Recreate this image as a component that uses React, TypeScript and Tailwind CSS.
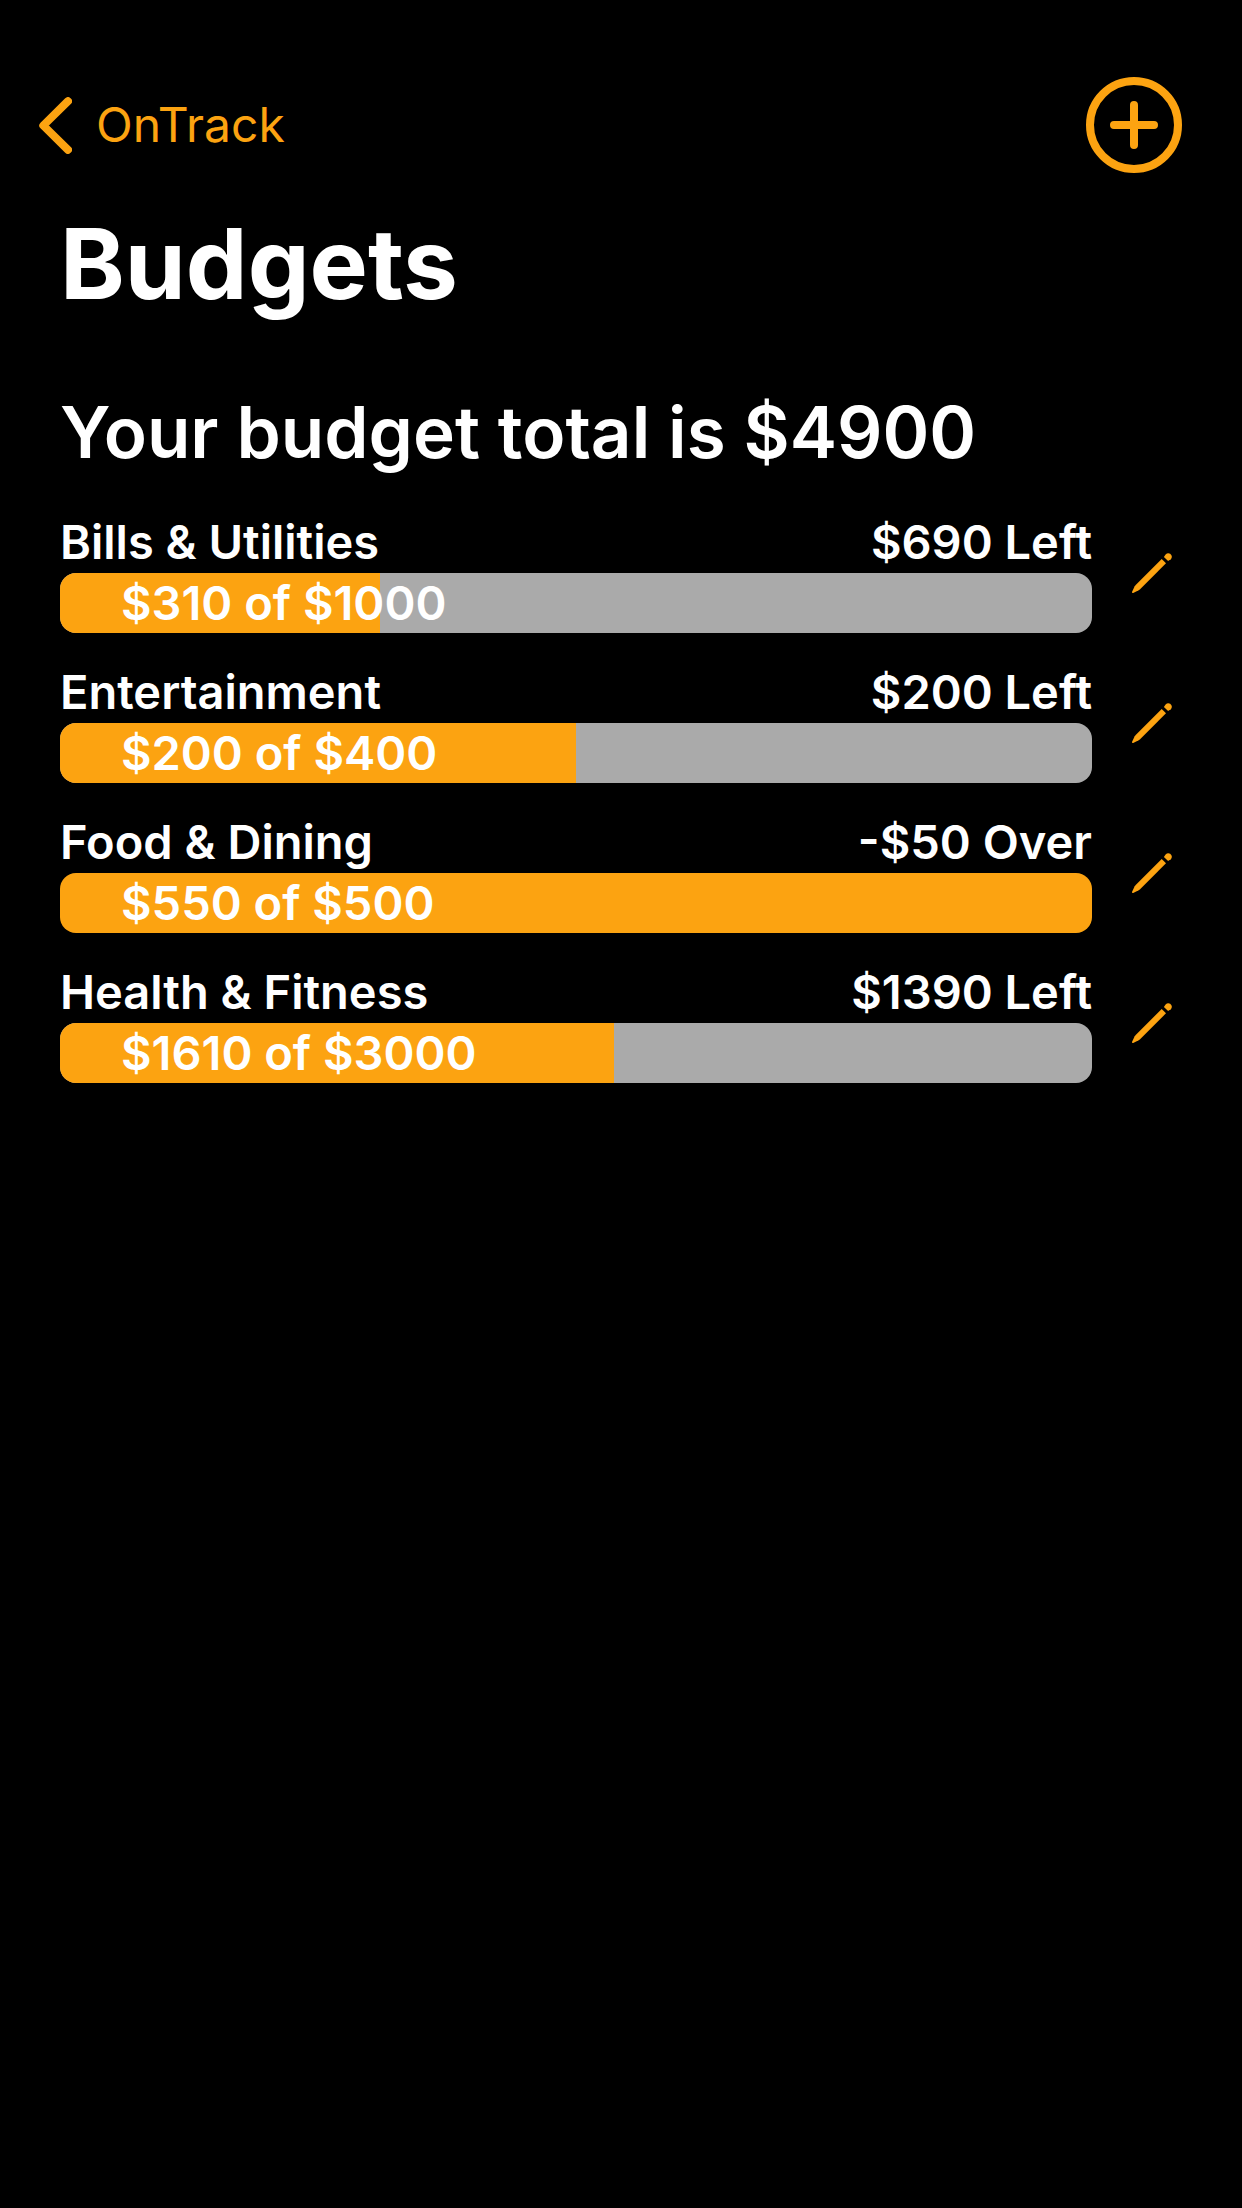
type Budget = { name: string; spent: number; limit: number };

const budgets: Budget[] = [
  { name: "Bills & Utilities", spent: 310, limit: 1000 },
  { name: "Entertainment", spent: 200, limit: 400 },
  { name: "Food & Dining", spent: 550, limit: 500 },
  { name: "Health & Fitness", spent: 1610, limit: 3000 },
];

const total = budgets.reduce((sum, b) => sum + b.limit, 0);

function ChevronIcon() {
  return (
    <svg viewBox="0 0 33 57" className="h-[57px] w-[33px]" fill="none" stroke="currentColor" strokeWidth="8" strokeLinecap="round" strokeLinejoin="round" aria-hidden="true">
      <path d="M29 4.2 4.3 28.5 29 52.8" />
    </svg>
  );
}

function PlusCircleIcon() {
  return (
    <svg viewBox="0 0 96 96" className="size-24" fill="none" stroke="currentColor" strokeWidth="8" strokeLinecap="round" aria-hidden="true">
      <circle cx="48" cy="48" r="44" />
      <path d="M48 28v40M28 48h40" />
    </svg>
  );
}

function PencilIcon() {
  return (
    <svg viewBox="0 0 40 40" className="size-10" fill="currentColor" aria-hidden="true">
      <path d="M29.7 6 34 10.3 8.1 36.3Q7.5 36.9 6.7 37.3L1.2 39.9Q-.3 40.3.1 38.8L2.7 33.3Q3.1 32.5 3.7 31.9Z" />
      <path d="M31.9 3.9 33.6 1.6Q35.6-.5 38.2.8 41.2 3.4 38.8 6.2L36.1 8.1Z" />
    </svg>
  );
}

function BudgetRow({ name, spent, limit }: Budget) {
  const left = limit - spent;
  const status = left < 0 ? `-$${-left} Over` : `$${left} Left`;
  const percent = Math.min(100, (spent / limit) * 100);

  return (
    <li className="flex items-center gap-10">
      <div className="min-w-0 flex-1">
        <div className="flex justify-between pb-0.5 leading-[58px]">
          <span>{name}</span>
          <span>{status}</span>
        </div>
        <div className="relative h-[60px] overflow-hidden rounded-2xl bg-[#aaaaaa]">
          <div className="h-full bg-[#fca311]" style={{ width: `${percent}%` }} />
          <span className="absolute inset-y-0 left-[61px]">
            ${spent} of ${limit}
          </span>
        </div>
      </div>
      <button type="button" aria-label={`Edit ${name}`} className="mr-[10px] text-[#fca311]">
        <PencilIcon />
      </button>
    </li>
  );
}

export default function App() {
  return (
    <div className="min-h-screen bg-black pt-[77px] pb-16 font-['Inter',sans-serif] text-white">
      <header className="flex items-center justify-between pr-[60px] pl-[39px] text-[#fca311]">
        <a href="#" className="flex items-center gap-6 text-[48px] leading-[60px]">
          <ChevronIcon />
          OnTrack
        </a>
        <button type="button" aria-label="Add budget">
          <PlusCircleIcon />
        </button>
      </header>
      <main className="px-[60px]">
        <h1 className="mt-[31px] text-[98px] leading-[120px] font-bold">Budgets</h1>
        <h2 className="mt-[63px] text-[71px] leading-[90px] font-semibold">Your budget total is ${total}</h2>
        <ul className="mt-9 flex flex-col gap-[30px] text-[47px] leading-[60px] font-semibold">
          {budgets.map((b) => (
            <BudgetRow key={b.name} {...b} />
          ))}
        </ul>
      </main>
    </div>
  );
}
